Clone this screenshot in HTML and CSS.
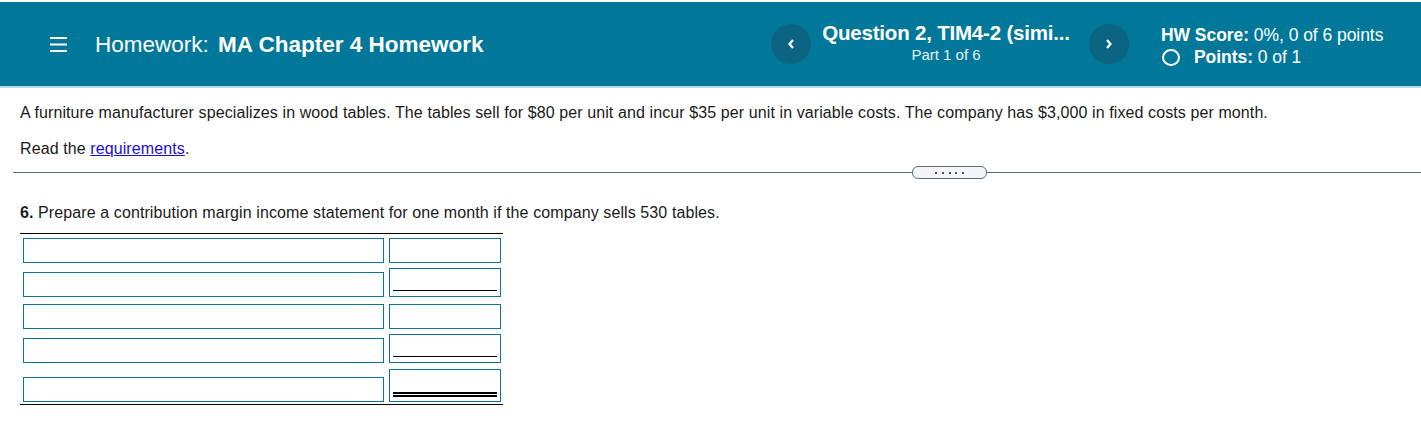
FILE: index.html
```html
<!DOCTYPE html>
<html>
<head>
<meta charset="utf-8">
<link rel="stylesheet" href="styles.css">
</head>
<body>
<header class="topbar">
  <div class="title-group">
    <svg class="hamburger" width="17" height="16" viewBox="0 0 17 16"><rect x="0" y="1" width="17" height="2" fill="#fff"/><rect x="0" y="7.5" width="17" height="2" fill="#fff"/><rect x="0" y="14" width="17" height="2" fill="#fff"/></svg>
    <div class="title"><span class="title-light">Homework:</span> <span class="title-bold">MA Chapter 4 Homework</span></div>
  </div>
  <div class="nav">
    <button class="circle-btn" aria-label="Previous"><svg width="8" height="12" viewBox="0 0 8 12"><path d="M6 2 L2.5 6 L6 10" stroke="#fff" stroke-width="2.2" fill="none"/></svg></button>
    <div class="question">
      <div class="q-title">Question 2, TIM4-2 (simi...</div>
      <div class="q-part">Part 1 of 6</div>
    </div>
    <button class="circle-btn" aria-label="Next"><svg width="8" height="12" viewBox="0 0 8 12"><path d="M2 2 L5.5 6 L2 10" stroke="#fff" stroke-width="2.2" fill="none"/></svg></button>
  </div>
  <div class="score">
    <div class="score-line"><b>HW Score:</b> 0%, 0 of 6 points</div>
    <div class="score-line points"><span class="ring"></span><b>Points:</b>&nbsp;0 of 1</div>
  </div>
</header>

<main class="content">
  <p class="problem">A furniture manufacturer specializes in wood tables. The tables sell for $80 per unit and incur $35 per unit in variable costs. The company has $3,000 in fixed costs per month.</p>
  <p class="read">Read the <a href="#">requirements</a>.</p>
</main>

<div class="divider">
  <div class="rule left"></div>
  <div class="pill"><span></span><span></span><span></span><span></span><span></span></div>
  <div class="rule"></div>
</div>

<section class="question-body">
  <p class="prompt"><b>6.</b> Prepare a contribution margin income statement for one month if the company sells 530 tables.</p>
  <div class="stmt">
    <div class="row r1">
      <input class="label-in" type="text">
      <input class="amt-in" type="text">
    </div>
    <div class="row r2">
      <input class="label-in" type="text">
      <div class="amt-box"><div class="amt-line single"></div></div>
    </div>
    <div class="row r3">
      <input class="label-in" type="text">
      <input class="amt-in" type="text">
    </div>
    <div class="row r4">
      <input class="label-in" type="text">
      <div class="amt-box"><div class="amt-line single"></div></div>
    </div>
    <div class="row r5">
      <input class="label-in" type="text">
      <div class="amt-box dbl"><div class="amt-line double"></div></div>
    </div>
  </div>
</section>
</body>
</html>
```

FILE: styles.css
```css
* { box-sizing: border-box; }
body {
  margin: 0;
  font-family: "Liberation Sans", Arial, sans-serif;
  color: #1a1a1a;
  background: #fff;
}
.topbar {
  margin-top: 2px;
  height: 86px;
  background: #017899;
  border-bottom: 2px solid #b9dbe6;
  display: flex;
  align-items: center;
  padding-left: 50px;
  color: #fff;
}
.title-group {
  flex: 1;
  display: flex;
  align-items: center;
  margin-top: 2px;
}
.hamburger { margin-right: 28px; display: block; margin-top: -2px; }
.title { font-size: 22.5px; letter-spacing: 0; }
.title-bold { font-weight: bold; margin-left: 3px; }
.nav {
  display: flex;
  align-items: center;
}
.circle-btn {
  width: 40px;
  height: 40px;
  border-radius: 50%;
  border: none;
  background: #0b6482;
  display: flex;
  align-items: center;
  justify-content: center;
  padding: 0;
}
.question {
  width: 278px;
  text-align: center;
  padding-right: 8px;
  margin-top: -2px;
}
.q-title { font-size: 20.5px; font-weight: bold; line-height: 24px; letter-spacing: -0.2px; white-space: nowrap; }
.q-part { font-size: 15px; line-height: 20px; color: #e6f2f6; margin-top: 0; }
.score {
  width: 260px;
  margin-left: 32px;
  font-size: 17.5px;
  margin-top: 4px;
  letter-spacing: -0.05px;
}
.score-line { line-height: 22px; white-space: nowrap; }
.points { display: flex; align-items: center; }
.ring {
  width: 18px;
  height: 17px;
  border: 2px solid #fff;
  border-radius: 50%;
  margin-left: 1px;
  margin-right: 14px;
}
.content { padding-left: 20px; font-size: 16px; letter-spacing: 0.1px; }
.problem { margin: 16px 0 0; line-height: 18px; }
.read { margin: 18px 0 0; line-height: 18px; }
.read a { color: #1a0dd8; }
.divider {
  display: flex;
  align-items: center;
  padding-left: 13px;
  margin-top: 8px;
  height: 13px;
}
.rule { flex: 1; height: 1px; background: #5f6d7b; }
.rule.left { flex: 0 0 899px; }
.pill {
  width: 75px;
  height: 13px;
  border: 1px solid #5f6d7b;
  border-radius: 6px;
  background: #f2f4f7;
  display: flex;
  align-items: center;
  justify-content: center;
  gap: 4.7px;
}
.pill span { width: 2px; height: 2px; background: #46525e; }
.question-body { padding-left: 20px; font-size: 16px; letter-spacing: 0.1px; }
.prompt { margin: 25px 0 0; line-height: 18px; }
.stmt {
  width: 483px;
  margin-top: 11px;
  border-top: 1px solid #000;
  border-bottom: 1px solid #000;
  padding: 4px 0 2px 3px;
}
.row {
  display: flex;
  align-items: flex-end;
  gap: 5px;
}
.r2, .r4 { margin-top: 5px; }
.r3 { margin-top: 7px; }
.r5 { margin-top: 6px; }
input {
  font: inherit;
  margin: 0;
  outline: none;
  background: #fff;
}
.label-in {
  width: 361px;
  height: 25px;
  border: 1px solid #0a7594;
  padding: 0 3px;
}
.amt-in {
  width: 112px;
  height: 25px;
  border: 1px solid #0a7594;
}
.amt-box {
  width: 112px;
  height: 29px;
  border: 1px solid #0a7594;
  padding: 0 3px 5px 3px;
  display: flex;
  align-items: flex-end;
}
.amt-box.dbl { height: 33px; padding-bottom: 4px; }
.amt-line { width: 100%; }
.amt-line.single { height: 23px; border-bottom: 1px solid #000; }
.amt-line.double {
  height: 27px;
  background: linear-gradient(to bottom, transparent 22px, #000 22px, #000 24px, transparent 24px, transparent 25px, #000 25px, #000 27px);
}
```
